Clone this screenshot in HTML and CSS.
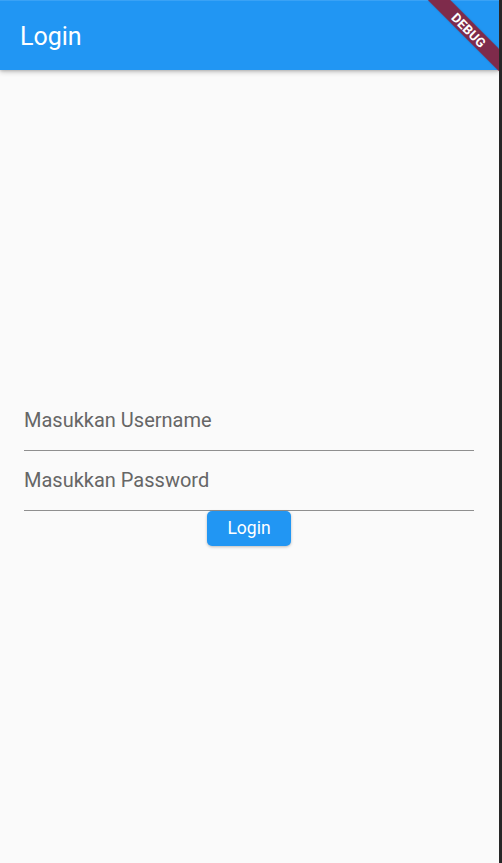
FILE: index.html
```html
<!DOCTYPE html>
<html>
<head>
<meta charset="utf-8">
<link rel="stylesheet" href="styles.css">
</head>
<body>
<div class="screen">
  <div class="app">
    <header class="appbar">
      <div class="statusline"></div>
      <h1 class="title">Login</h1>
    </header>
    <main class="body">
      <form class="form">
        <div class="field"><input class="input" type="text" placeholder="Masukkan Username"></div>
        <div class="field"><input class="input" type="password" placeholder="Masukkan Password"></div>
        <button type="button" class="btn">Login</button>
      </form>
    </main>
    <div class="banner"><span>DEBUG</span></div>
  </div>
  <div class="edge"></div>
</div>
</body>
</html>
```
FILE: styles.css
```css
* { box-sizing: border-box; }
html, body { margin: 0; padding: 0; height: 100%; }
body { font-family: Roboto, "Noto Sans", sans-serif; background: #2a2a2a; }
.screen { display: flex; height: 863px; width: 502px; overflow: hidden; }
.app { position: relative; width: 499px; height: 100%; background: #fafafa; display: flex; flex-direction: column; overflow: hidden; }
.edge { width: 3px; background: #262626; }
.appbar { position: relative; z-index: 2; height: 70px; background: #2196f3; box-shadow: 0 2px 5px rgba(0,0,0,0.22), 0 1px 2px rgba(0,0,0,0.12); display: flex; align-items: center; padding: 0 20px; flex: none; }
.statusline { position: absolute; left: 0; right: 0; top: 0; height: 1px; background: #3aa2f5; }
.title { margin: 0; color: #fff; font-size: 25px; font-weight: 400; line-height: 1; padding-top: 2px; }
.body { flex: 1; display: flex; flex-direction: column; justify-content: center; padding: 0 25px 0 24px; }
.form { display: flex; flex-direction: column; align-items: center; margin-top: 3px; }
.field { width: 100%; height: 60px; border-bottom: 1px solid #8f8f8f; display: flex; align-items: center; }
.input { width: 100%; border: 0; outline: 0; background: transparent; font-family: Roboto, sans-serif; font-size: 20px; color: #333; padding: 0; margin-top: 0; }
.input::placeholder { color: #666; }
.btn { width: 84px; height: 35px; border: 0; border-radius: 5px; background: #2196f3; color: #fff; font-family: Roboto, sans-serif; font-size: 17.5px; font-weight: 400; box-shadow: 0 1px 3px rgba(0,0,0,0.25); padding: 0; }
.banner { position: absolute; z-index: 3; width: 100px; height: 16px; right: -20px; top: 22px; transform: rotate(45deg); background: rgba(130,38,68,0.96); box-shadow: 0 0 2px rgba(0,0,0,0.2); display: flex; align-items: center; justify-content: center; }
.banner span { color: #fff; font-family: Roboto, sans-serif; font-weight: 700; font-size: 13px; line-height: 1; letter-spacing: 0.2px; }
```
